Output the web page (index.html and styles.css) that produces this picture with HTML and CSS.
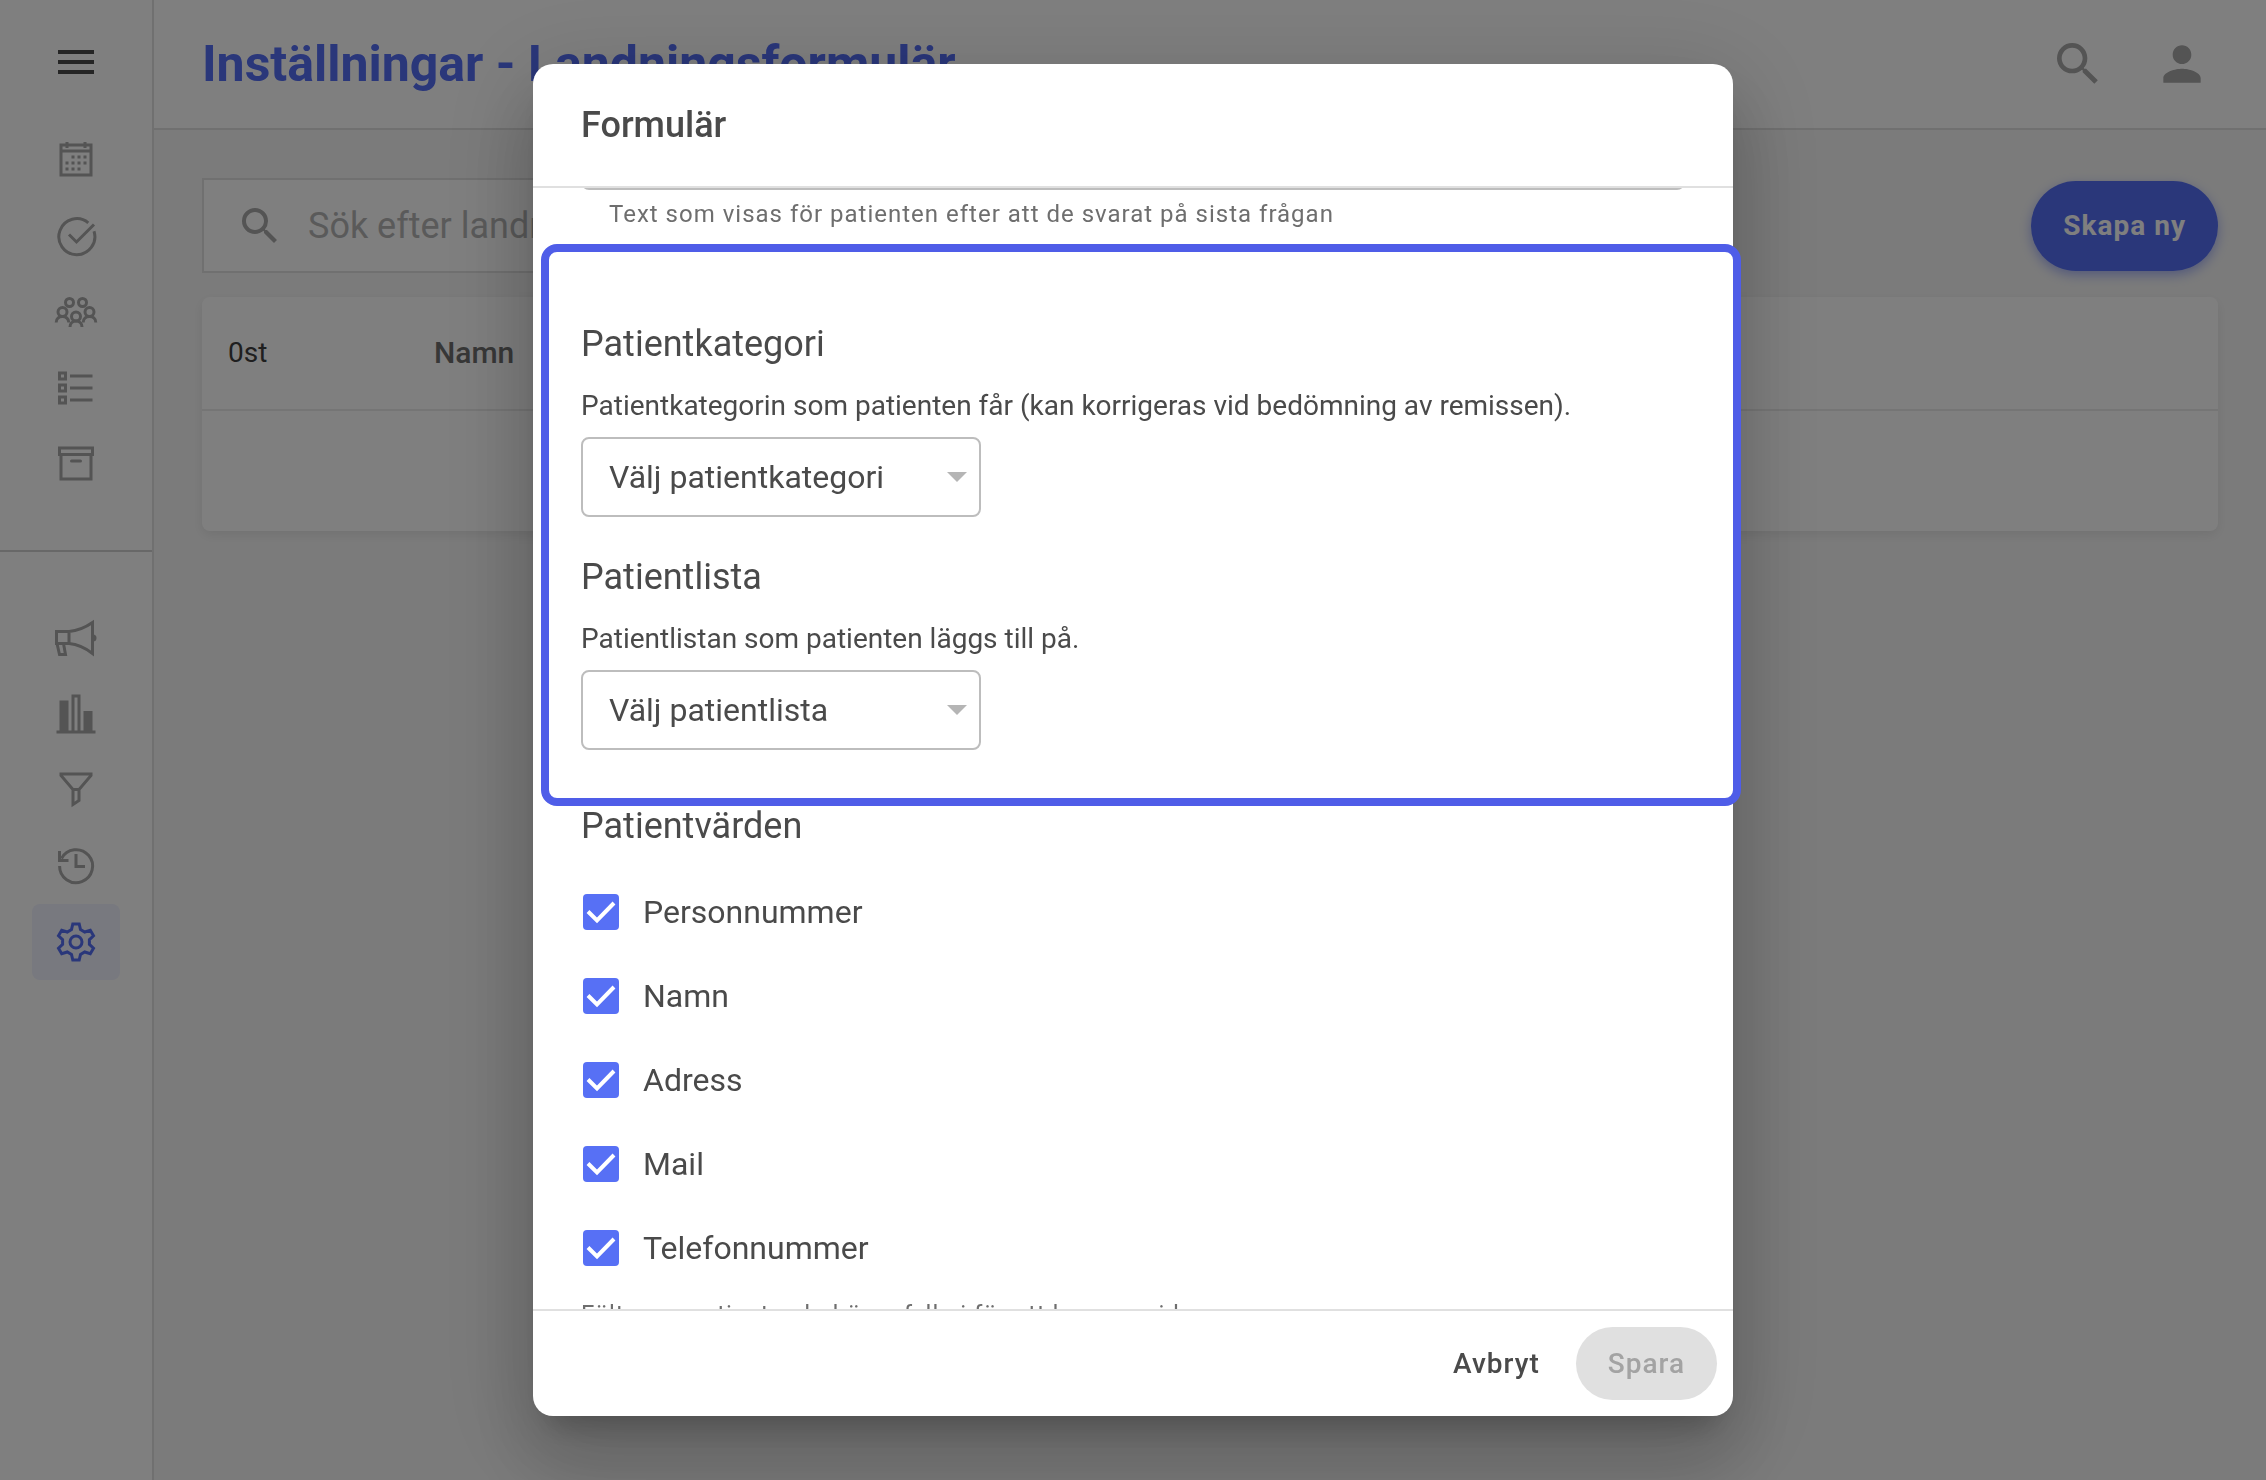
FILE: index.html
```html
<!DOCTYPE html>
<html lang="sv">
<head>
<meta charset="utf-8">
<title>Inställningar - Landningsformulär</title>
<link rel="stylesheet" href="styles.css">
</head>
<body>
<div class="app">
  <aside class="sidebar">
    <button class="menu-button" type="button" aria-label="Meny">
      <svg class="icon-md" viewBox="0 0 24 24"><path fill="currentColor" d="M3 18h18v-2H3v2zm0-5h18v-2H3v2zm0-7v2h18V6H3z"/></svg>
    </button>
    <nav class="nav-group" aria-label="Huvudmeny">
      <a class="nav-item" href="#" aria-label="Kalender">
        <svg class="icon-nav" viewBox="0 0 44 44"><path d="M7 7h30v30H7zM7 13h30M13 4v6M31 4v6"/><path stroke-width="3" stroke-dasharray="3 3" d="M17.500 19h15M11.500 25h21M11.500 31h15"/></svg>
      </a>
      <a class="nav-item" href="#" aria-label="Uppgifter">
        <svg class="icon-nav" viewBox="0 0 44 44"><path d="M34.300 8.800A18 18 0 1 0 40 17.200M15 20.500l7.500 7.500L40 10.500"/></svg>
      </a>
      <a class="nav-item" href="#" aria-label="Patienter">
        <svg class="icon-nav" viewBox="0 0 44 44"><circle cx="15.500" cy="12.500" r="4"/><circle cx="28.500" cy="12.500" r="4"/><circle cx="8.500" cy="22" r="4.500"/><circle cx="35.500" cy="22" r="4.500"/><circle cx="22" cy="26.500" r="4.500"/><path d="M2.200 32.500c0-8 12.600-8 12.600 0M29.200 32.500c0-8 12.600-8 12.600 0M16 37c0-8 12-8 12 0"/></svg>
      </a>
      <a class="nav-item" href="#" aria-label="Listor">
        <svg class="icon-nav" viewBox="0 0 44 44"><path d="M5.500 7h6v6h-6zM5.500 19h6v6h-6zM5.500 31h6v6h-6zM16 10h22.500M16 22h22.500M16 34h22.500"/></svg>
      </a>
      <a class="nav-item" href="#" aria-label="Arkiv">
        <svg class="icon-nav" viewBox="0 0 44 44"><path d="M5.500 6h33v6.500h-33zM7 12.500h30V37H7z"/><path stroke-linecap="round" d="M17.500 19h9"/></svg>
      </a>
    </nav>
    <nav class="nav-group nav-group-secondary" aria-label="Verktyg">
      <a class="nav-item" href="#" aria-label="Utskick">
        <svg class="icon-nav" viewBox="0 0 44 44"><path d="M2.500 15.500h12.500v12h-12.500zM15 15.500Q27 14.500 38.500 6.500v31Q27 28.500 15 27.500M3 27.500l2.500 11h6l-2-11"/><path fill="currentColor" stroke="none" d="M39 18.500a3.500 3.500 0 0 1 0 7z"/></svg>
      </a>
      <a class="nav-item" href="#" aria-label="Statistik">
        <svg class="icon-nav" viewBox="0 0 44 44"><path d="M2.500 40h39M19 40V4h6v36"/><path fill="currentColor" stroke="none" d="M5.500 8.500h9V40h-9zM29.500 19h9v21h-9z"/></svg>
      </a>
      <a class="nav-item" href="#" aria-label="Filter">
        <svg class="icon-nav" viewBox="0 0 44 44"><path d="M7 6h30v1.500L25 21.500v11l-6 4v-15L7 7.500zM19 21.500h6"/></svg>
      </a>
      <a class="nav-item" href="#" aria-label="Historik">
        <svg class="icon-nav" viewBox="0 0 44 44"><path d="M5.600 22A16.500 16.500 0 1 0 7.500 14.500M5.500 7v9.500h9M22 10v12.500h9"/></svg>
      </a>
      <a class="nav-item nav-item-active" href="#" aria-label="Inställningar" aria-current="page">
        <svg class="icon-nav" viewBox="0 0 44 44"><circle cx="22" cy="22" r="6"/><path d="M18.800 4h6.400l1.300 5.600 4.200 2.400 5.600-1.800 3.200 5.500-4.100 4v4.600l4.100 4-3.200 5.500-5.600-1.800-4.200 2.400-1.300 5.600h-6.400l-1.300-5.600-4.200-2.400-5.600 1.800-3.200-5.500 4.100-4v-4.600l-4.100-4 3.200-5.500 5.600 1.800 4.200-2.400z"/></svg>
      </a>
    </nav>
  </aside>
  <div class="page">
    <header class="topbar">
      <h1 class="page-title">Inställningar - Landningsformulär</h1>
      <div class="topbar-actions">
        <button class="icon-button" type="button" aria-label="Sök">
          <svg class="icon-lg" viewBox="0 0 24 24"><path fill="currentColor" d="M15.500 14h-.79l-.28-.27A6.470 6.470 0 0 0 16 9.500 6.500 6.500 0 1 0 9.500 16c1.610 0 3.090-.59 4.230-1.570l.27.28v.79l5 4.990L20.490 19l-4.990-5zm-6 0C7.010 14 5 11.990 5 9.500S7.010 5 9.500 5 14 7.010 14 9.500 11.990 14 9.500 14z"/></svg>
        </button>
        <button class="icon-button" type="button" aria-label="Konto">
          <svg class="icon-lg" viewBox="0 0 24 24"><path fill="currentColor" d="M12 12c2.210 0 4-1.790 4-4s-1.790-4-4-4-4 1.790-4 4 1.790 4 4 4zm0 2c-2.670 0-8 1.340-8 4v2h16v-2c0-2.660-5.330-4-8-4z"/></svg>
        </button>
      </div>
    </header>
    <main class="content">
      <div class="toolbar">
        <label class="search">
          <svg class="icon-md" viewBox="0 0 24 24"><path fill="currentColor" d="M15.500 14h-.79l-.28-.27A6.470 6.470 0 0 0 16 9.500 6.500 6.500 0 1 0 9.500 16c1.610 0 3.090-.59 4.230-1.570l.27.28v.79l5 4.990L20.490 19l-4.990-5zm-6 0C7.010 14 5 11.990 5 9.500S7.010 5 9.500 5 14 7.010 14 9.500 11.990 14 9.500 14z"/></svg>
          <input class="search-input" type="search" placeholder="Sök efter landningsformulär" aria-label="Sök efter landningsformulär">
        </label>
        <button class="button button-primary" type="button">Skapa ny</button>
      </div>
      <table class="forms-table">
        <thead>
          <tr><td class="col-count">0st</td><th class="col-name" scope="col">Namn</th><td class="col-actions"></td></tr>
        </thead>
        <tbody>
          <tr><td></td><td></td><td></td></tr>
        </tbody>
      </table>
    </main>
  </div>
</div>

<div class="overlay">
  <div class="dialog" role="dialog" aria-modal="true" aria-labelledby="dialog-title">
    <h2 class="dialog-title" id="dialog-title">Formulär</h2>
    <div class="dialog-body">
      <textarea class="end-text" rows="1" aria-label="Sluttext" aria-describedby="end-help"></textarea>
      <p class="helper helper-inset" id="end-help">Text som visas för patienten efter att de svarat på sista frågan</p>
      <section class="field first-field">
        <h3 class="field-title">Patientkategori</h3>
        <label class="field-text" for="category">Patientkategorin som patienten får (kan korrigeras vid bedömning av remissen).</label>
        <select class="select" id="category"><option>Välj patientkategori</option></select>
      </section>
      <section class="field">
        <h3 class="field-title">Patientlista</h3>
        <label class="field-text" for="list">Patientlistan som patienten läggs till på.</label>
        <select class="select" id="list"><option>Välj patientlista</option></select>
      </section>
      <section class="values">
        <h3 class="field-title">Patientvärden</h3>
        <div class="check-list">
          <label class="check"><input class="check-box" type="checkbox" checked>Personnummer</label>
          <label class="check"><input class="check-box" type="checkbox" checked>Namn</label>
          <label class="check"><input class="check-box" type="checkbox" checked>Adress</label>
          <label class="check"><input class="check-box" type="checkbox" checked>Mail</label>
          <label class="check"><input class="check-box" type="checkbox" checked>Telefonnummer</label>
        </div>
        <p class="helper">Fält som patienten behöver fylla i för att komma vidare</p>
      </section>
    </div>
    <footer class="dialog-actions">
      <button class="button button-text" type="button">Avbryt</button>
      <button class="button button-disabled" type="button" disabled>Spara</button>
    </footer>
    <div class="highlight"></div>
  </div>
</div>
</body>
</html>
```
FILE: styles.css
```css
:root {
  --primary: #546ef5;
  --highlight: #4f5de8;
  --text: #4a4a4a;
  --muted: #6e6e6e;
  --icon: #a8a8a8;
  --line: #e0e0e0;
  --control: #bdbdbd;
  --pad: 48px;
}

* { box-sizing: border-box; }

body {
  margin: 0;
  font-family: Roboto, "Liberation Sans", sans-serif;
  font-size: 28px;
  line-height: 40px;
  color: var(--text);
}

h1, h2, h3, p { margin: 0; }

button, input, select, textarea { font: inherit; color: inherit; letter-spacing: inherit; }

button { border: 0; padding: 0; background: none; }

svg { display: block; }

.app { display: flex; min-height: 100vh; background: #f7f7f7; }

.icon-md { width: 48px; height: 48px; }
.icon-lg { width: 56px; height: 56px; }
.icon-nav { width: 44px; height: 44px; fill: none; stroke: currentColor; stroke-width: 3; }

.sidebar {
  flex: none;
  width: 154px;
  background: #fff;
  border-right: 2px solid var(--line);
}

.menu-button { display: flex; justify-content: center; width: 100%; padding: 38px 0 36px; }

.nav-group { display: flex; flex-direction: column; align-items: center; padding-bottom: 48px; }
.nav-group-secondary { border-top: 2px solid #d0d0d0; padding-top: 48px; }

.nav-item {
  display: flex;
  align-items: center;
  justify-content: center;
  width: 88px;
  height: 76px;
  border-radius: 8px;
  color: var(--icon);
}
.nav-item-active { background: #f0f2ff; color: var(--primary); }

.page { flex: 1; min-width: 0; }

.topbar {
  display: flex;
  align-items: center;
  justify-content: space-between;
  height: 130px;
  padding: 0 56px 0 var(--pad);
  background: #fff;
  border-bottom: 2px solid var(--line);
}
.page-title { font-size: 50px; line-height: 64px; font-weight: 700; color: var(--primary); }
.topbar-actions { display: flex; gap: 48px; color: var(--icon); }

.content { padding: var(--pad); }

.toolbar { display: flex; align-items: center; justify-content: space-between; }

.search {
  display: flex;
  align-items: center;
  gap: 24px;
  width: 900px;
  height: 95px;
  padding: 0 32px;
  background: #fff;
  border: 2px solid var(--line);
  color: var(--icon);
}
.search-input { flex: 1; border: 0; outline: 0; padding: 0; background: none; font-size: 36px; }
.search-input::placeholder { color: #b4b4b4; opacity: 1; }

.button { height: 73px; padding: 0 32px; border-radius: 48px; font-weight: 500; letter-spacing: 1px; }
.button-primary {
  height: 90px;
  background: var(--primary);
  color: #fff;
  font-weight: 700;
  box-shadow: 0 4px 12px rgba(84, 110, 245, .5);
}
.button-disabled { background: #e0e0e0; color: #a3a3a3; }

.forms-table {
  width: 100%;
  margin-top: 24px;
  border-spacing: 0;
  table-layout: fixed;
  background: #fff;
  border-radius: 8px;
  box-shadow: 0 4px 12px rgba(0, 0, 0, .08);
}
.forms-table td, .forms-table th { padding: 0 12px 0 26px; height: 120px; text-align: left; font-weight: 400; }
.forms-table thead td, .forms-table thead th { height: 114px; border-bottom: 2px solid #ebebeb; }
.forms-table .col-count { width: 206px; color: #3e3e3e; }
.forms-table .col-name { font-size: 30px; font-weight: 500; color: #6e6e6e; }
.forms-table .col-actions { width: 378px; }

.overlay {
  position: fixed;
  inset: 0;
  display: flex;
  align-items: center;
  justify-content: center;
  padding: 64px;
  background: rgba(0, 0, 0, .5);
}

.dialog {
  position: relative;
  display: flex;
  flex-direction: column;
  width: 100%;
  max-width: 1200px;
  height: 100%;
  background: #fff;
  border-radius: 20px;
  box-shadow: 0 22px 30px -14px rgba(0, 0, 0, .2), 0 48px 76px 6px rgba(0, 0, 0, .14), 0 18px 92px 16px rgba(0, 0, 0, .12);
}

.dialog-title {
  flex: none;
  padding: 40px 48px;
  border-bottom: 2px solid var(--line);
  font-size: 36px;
  line-height: 42px;
  font-weight: 500;
}

/* Scrolled down so that only the lower edge of the end text box shows */
.dialog-body {
  flex: 1;
  min-height: 0;
  overflow: hidden;
  padding: 0 48px;
}

.end-text {
  display: block;
  width: 100%;
  height: 88px;
  margin-top: -86px;
  border: 2px solid var(--control);
  border-radius: 8px;
  resize: none;
}

.helper { font-size: 24px; line-height: 32px; color: var(--muted); letter-spacing: 1px; }
.helper-inset { padding: 8px 28px; }

.field { display: flex; flex-direction: column; align-items: flex-start; padding-bottom: 36px; }
.first-field { padding-top: 82px; }

.field-title { font-size: 36px; line-height: 48px; font-weight: 400; }
.field-text { margin: 18px 0 11px; line-height: 40px; }

.select {
  appearance: none;
  width: 400px;
  height: 80px;
  padding: 0 26px;
  border: 2px solid var(--control);
  border-radius: 8px;
  font-size: 32px;
  background: #fff url('data:image/svg+xml,<svg xmlns="http://www.w3.org/2000/svg" viewBox="0 0 20 10"><path fill="%23b5b5b5" d="M0 0h20L10 10z"/></svg>') right 12px center / 20px 10px no-repeat;
}

.values { padding-top: 16px; }
.check-list { display: flex; flex-direction: column; padding: 20px 0 8px; }
.check { display: flex; align-items: center; gap: 24px; height: 84px; padding-left: 2px; font-size: 32px; }
.check-box {
  appearance: none;
  width: 36px;
  height: 36px;
  margin: 0;
  border-radius: 4px;
  background: #5770f5 url('data:image/svg+xml,<svg xmlns="http://www.w3.org/2000/svg" viewBox="0 0 36 36"><path fill="none" stroke="white" stroke-width="4" d="M5 17.500l9 9L31 9"/></svg>') center / 36px 36px no-repeat;
}

.dialog-actions {
  flex: none;
  display: flex;
  align-items: center;
  justify-content: flex-end;
  gap: 4px;
  padding: 16px;
  border-top: 2px solid var(--line);
}

.highlight {
  position: absolute;
  top: 180px;
  left: 8px;
  width: 100%;
  height: 562px;
  border: 8px solid var(--highlight);
  border-radius: 16px;
  pointer-events: none;
}
```
